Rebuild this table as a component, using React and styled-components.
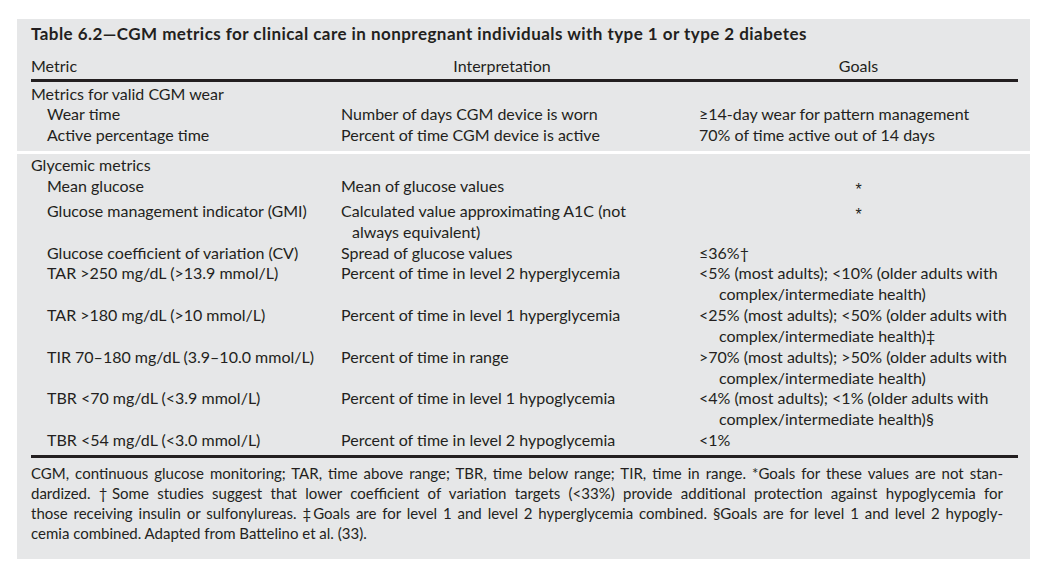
import React from 'react';
import styled, { createGlobalStyle } from 'styled-components';

const GlobalStyle = createGlobalStyle`
  html, body { margin: 0; padding: 0; background: #ffffff; }
  body { font-family: Lato, "Open Sans", sans-serif; color: #231f20; }
`;

const Panel = styled.section`
  margin: 19px 0 0 17px;
  width: 1013px;
  box-sizing: border-box;
  background: #e6e7e8;
  padding: 4px 0 16px;
`;

const Block = styled.div`
  padding: 0 12px 0 14px;
`;

const Title = styled.h1`
  margin: 0;
  font-weight: 700;
  font-size: 17px;
  letter-spacing: 0.45px;
  line-height: 21px;
  white-space: nowrap;
`;

const Grid = styled.div`
  display: grid;
  grid-template-columns: 310px 358px 1fr;
  font-size: 16px;
  line-height: 20.85px;
`;

const HeadRow = styled(Grid)`
  margin-top: 11.5px;
  padding-bottom: 2.6px;
  border-bottom: 3px solid #231f20;
`;

const HeadCell = styled.div`
  text-align: ${(p) => p.$align || 'left'};
  padding-right: ${(p) => p.$pr || 0}px;
`;

const Section = styled.div`
  padding-top: ${(p) => p.$pt}px;
  padding-bottom: ${(p) => p.$pb}px;
  border-bottom: ${(p) => (p.$rule ? '3px solid #231f20' : 'none')};
`;

const SectionHeading = styled.div`
  font-size: 16px;
  line-height: 20.85px;
`;

const Cell = styled.div`
  padding-left: ${(p) => p.$indent || 0}px;
  text-align: ${(p) => p.$align || 'left'};
`;

const Line = styled.div`
  white-space: nowrap;
  padding-left: ${(p) => (p.$cont ? p.$hang : 0)}px;
`;

const Star = styled.span`
  display: inline-block;
  font-family: "Liberation Sans", Arial, sans-serif;
  font-size: 16px;
  vertical-align: -0.2em;
`;

const Divider = styled.div`
  height: 3px;
  background: #ffffff;
`;

const Footnote = styled.div`
  margin-top: 5.4px;
  padding-right: 15px;
  font-size: 15px;
  line-height: 20px;
`;

const FootLine = styled.div`
  text-align: justify;
  text-align-last: ${(p) => (p.$last ? 'left' : 'justify')};
`;

const sections = [
  {
    heading: 'Metrics for valid CGM wear',
    rows: [
      { metric: 'Wear time', interp: ['Number of days CGM device is worn'], goal: ['≥14-day wear for pattern management'] },
      { metric: 'Active percentage time', interp: ['Percent of time CGM device is active'], goal: ['70% of time active out of 14 days'] },
    ],
  },
  {
    heading: 'Glycemic metrics',
    rows: [
      { metric: 'Mean glucose', interp: ['Mean of glucose values'], goal: ['*'], star: true },
      { metric: 'Glucose management indicator (GMI)', interp: ['Calculated value approximating A1C (not', 'always equivalent)'], goal: ['*'], star: true },
      { metric: 'Glucose coefficient of variation (CV)', interp: ['Spread of glucose values'], goal: ['≤36%†'] },
      { metric: 'TAR >250 mg/dL (>13.9 mmol/L)', interp: ['Percent of time in level 2 hyperglycemia'], goal: ['<5% (most adults); <10% (older adults with', 'complex/intermediate health)'] },
      { metric: 'TAR >180 mg/dL (>10 mmol/L)', interp: ['Percent of time in level 1 hyperglycemia'], goal: ['<25% (most adults); <50% (older adults with', 'complex/intermediate health)‡'] },
      { metric: 'TIR 70–180 mg/dL (3.9–10.0 mmol/L)', interp: ['Percent of time in range'], goal: ['>70% (most adults); >50% (older adults with', 'complex/intermediate health)'] },
      { metric: 'TBR <70 mg/dL (<3.9 mmol/L)', interp: ['Percent of time in level 1 hypoglycemia'], goal: ['<4% (most adults); <1% (older adults with', 'complex/intermediate health)§'] },
      { metric: 'TBR <54 mg/dL (<3.0 mmol/L)', interp: ['Percent of time in level 2 hypoglycemia'], goal: ['<1%'] },
    ],
  },
];

const footLines = [
  'CGM, continuous glucose monitoring; TAR, time above range; TBR, time below range; TIR, time in range. *Goals for these values are not stan-',
  'dardized. †Some studies suggest that lower coefficient of variation targets (<33%) provide additional protection against hypoglycemia for',
  'those receiving insulin or sulfonylureas. ‡Goals are for level 1 and level 2 hyperglycemia combined. §Goals are for level 1 and level 2 hypogly-',
  'cemia combined. Adapted from Battelino et al. (33).',
];

function Lines({ items, hang }) {
  return items.map((t, i) => (
    <Line key={i} $cont={i > 0} $hang={hang}>
      {t}
    </Line>
  ));
}

function Rows({ rows }) {
  return rows.map((r) => (
    <Grid key={r.metric}>
      <Cell $indent={16}>{r.metric}</Cell>
      <Cell>
        <Lines items={r.interp} hang={11} />
      </Cell>
      {r.star ? (
        <Cell $align="center">
          <Star>*</Star>
        </Cell>
      ) : (
        <Cell>
          <Lines items={r.goal} hang={20} />
        </Cell>
      )}
    </Grid>
  ));
}

export default function App() {
  const [first, second] = sections;
  return (
    <>
      <GlobalStyle />
      <Panel>
        <Block>
          <Title>Table 6.2—CGM metrics for clinical care in nonpregnant individuals with type 1 or type 2 diabetes</Title>
          <HeadRow>
            <HeadCell>Metric</HeadCell>
            <HeadCell $align="center" $pr={36}>Interpretation</HeadCell>
            <HeadCell $align="center">Goals</HeadCell>
          </HeadRow>
          <Section $pt={1.6} $pb={4.6}>
            <SectionHeading>{first.heading}</SectionHeading>
            <Rows rows={first.rows} />
          </Section>
        </Block>
        <Divider />
        <Block>
          <Section $pt={1.3} $pb={3.6} $rule>
            <SectionHeading>{second.heading}</SectionHeading>
            <Rows rows={second.rows} />
          </Section>
          <Footnote>
            {footLines.map((l, i) => (
              <FootLine key={i} $last={i === footLines.length - 1}>
                {l}
              </FootLine>
            ))}
          </Footnote>
        </Block>
      </Panel>
    </>
  );
}
